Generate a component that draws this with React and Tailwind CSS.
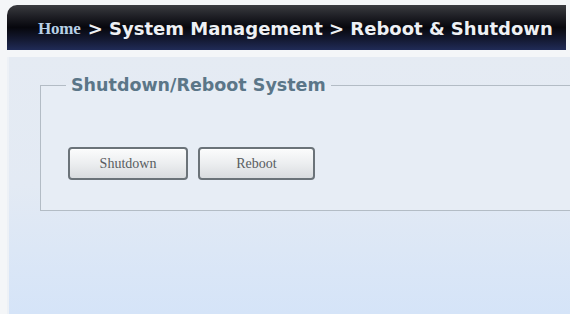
import React from "react";

const Button = ({ label, width }) => (
  <button
    className={`h-[33px] rounded-[4px] border-2 border-[#6b7379] bg-gradient-to-b from-[#fbfcfc] via-[#eceef0] to-[#d9dcdf] text-[14px] text-[#585c60] shadow-[inset_0_1px_0_#ffffff] ${width}`}
    style={{ fontFamily: '"Liberation Serif", "DejaVu Serif", serif' }}
  >
    {label}
  </button>
);

export default function App() {
  return (
    <div className="w-[570px] h-[314px] overflow-hidden bg-[#f4f6f8] pt-[5px]">
      {/* Breadcrumb bar */}
      <div className="ml-[7px] mr-[4px] h-[45px] rounded-tl-[10px] bg-gradient-to-b from-[#3a3b40] via-[#07070d] to-[#202b57] flex items-center pl-[31px] pt-[2px]">
        <span
          className="text-[17px] font-bold text-[#b8d0e6] tracking-[-0.2px]"
          style={{ fontFamily: '"Liberation Serif", "DejaVu Serif", serif' }}
        >
          Home
        </span>
        <span
          className="ml-[7px] text-[18px] font-bold text-[#eef0f4]"
          style={{ fontFamily: '"DejaVu Sans", Verdana, sans-serif' }}
        >
          &gt; System Management &gt; Reboot &amp; Shutdown
        </span>
      </div>

      {/* Content */}
      <div className="mt-[7px] ml-[7px] h-[257px] border-l-[2px] border-[#edf1f6] bg-gradient-to-b from-[#e5ebf3] via-[#e3eaf4] to-[#d5e4f8] pt-[15px] pl-[31px]">
        <fieldset className="h-[139px] border border-r-0 border-[#b3bcc5] bg-[#e7edf5] pl-[27px] pr-0">
          <legend
            className="-ml-[2px] px-[5px] text-[17.5px] font-bold text-[#5b7688]"
            style={{ fontFamily: '"DejaVu Sans", Verdana, sans-serif' }}
          >
            Shutdown/Reboot System
          </legend>
          <div className="mt-[49px] flex gap-[10px]">
            <Button label="Shutdown" width="w-[120px]" />
            <Button label="Reboot" width="w-[117px]" />
          </div>
        </fieldset>
      </div>
    </div>
  );
}
